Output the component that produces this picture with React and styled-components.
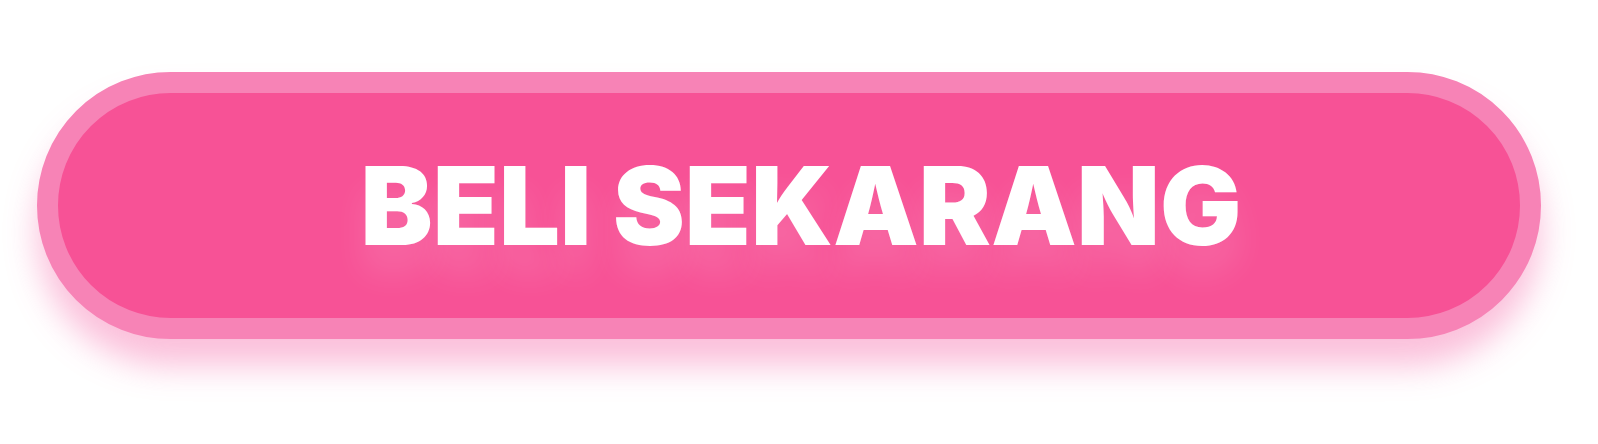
import React from 'react';
import styled, { createGlobalStyle } from 'styled-components';

const GlobalStyle = createGlobalStyle`
  body {
    margin: 0;
    background: #fff;
  }
`;

const Page = styled.main`
  display: flex;
  padding: 72px 57px 104px 37px;
`;

const BuyButton = styled.button`
  flex: 1;
  padding: 50px 0 49px 24px;
  border: 21px solid #f783b6;
  border-radius: 134px;
  background: #f75296;
  box-shadow: 0 27px 32px rgba(244, 80, 154, 0.36);
  color: #fff;
  font: 900 108px/126px Inter, sans-serif;
  text-shadow: 0 27px 32px rgba(255, 255, 255, 0.14);
  cursor: pointer;
`;

const App = () => (
  <>
    <GlobalStyle />
    <Page>
      <BuyButton type="button">BELI SEKARANG</BuyButton>
    </Page>
  </>
);

export default App;
